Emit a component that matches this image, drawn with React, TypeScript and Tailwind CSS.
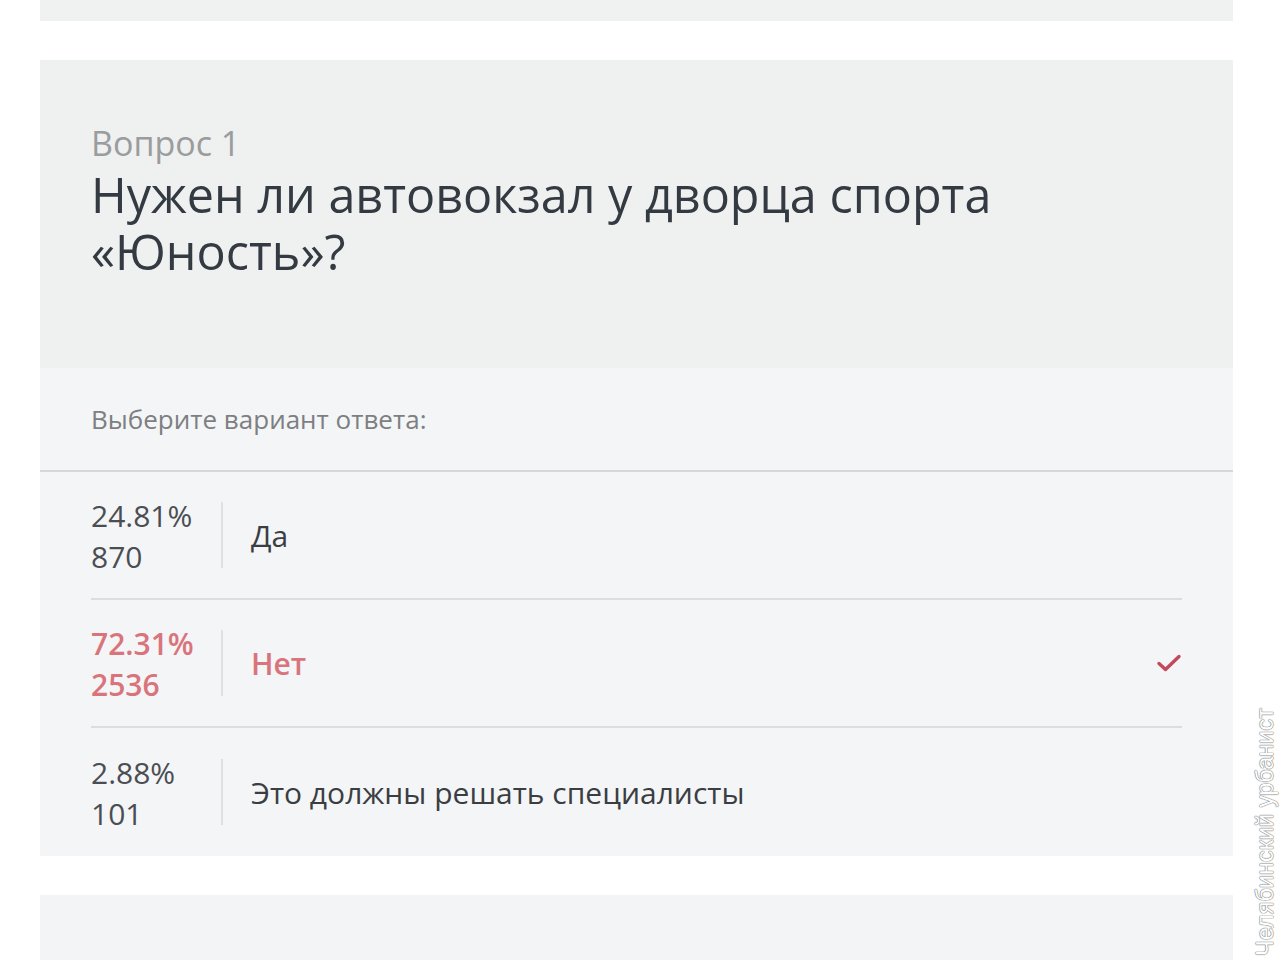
import React from "react";

const answers = [
  { pct: "24.81%", count: "870", label: "Да", chosen: false },
  { pct: "72.31%", count: "2536", label: "Нет", chosen: true },
  { pct: "2.88%", count: "101", label: "Это должны решать специалисты", chosen: false },
];

function Check() {
  return (
    <svg width="26" height="20" viewBox="0 0 26 20" fill="none">
      <path d="M3 10.5l6.5 6 13.5-13" stroke="#c5485f" strokeWidth="3.4" strokeLinecap="round" strokeLinejoin="round" />
    </svg>
  );
}

export default function App() {
  return (
    <div className="relative h-[960px] w-[1280px] overflow-hidden bg-white font-['Open_Sans',sans-serif]">
      <div className="ml-[40px] w-[1193px]">
        {/* previous question tail */}
        <div className="h-[21px] bg-[#f0f1f1]" />

        <div className="mt-[39px]">
          {/* question header */}
          <div className="h-[308px] bg-[#eff0f0] px-[51px] pt-[60px]">
            <div className="text-[34px] leading-[46px] text-[#9a9c9e]">Вопрос 1</div>
            <h2 className="text-[48.5px] leading-[57px] text-[#333a41]">
              Нужен ли автовокзал у дворца спорта
              <br />
              «Юность»?
            </h2>
          </div>

          {/* answers */}
          <div className="bg-[#f4f5f6]">
            <div className="h-[104px] border-b-2 border-[#d6d7d9] px-[51px] pt-[33px] text-[26px] leading-[36px] text-[#7d7f82]">
              Выберите вариант ответа:
            </div>
            <div className="px-[51px]">
              {answers.map((a, i) => (
                <div
                  key={a.label}
                  className={`flex h-[128px] items-center ${i < answers.length - 1 ? "border-b-2 border-[#dcdddf]" : ""}`}
                >
                  <div
                    className={`w-[130px] pt-[2px] text-[30px] leading-[41px] ${a.chosen ? "font-semibold text-[#d9747c]" : "text-[#4a4e53]"}`}
                  >
                    <div>{a.pct}</div>
                    <div>{a.count}</div>
                  </div>
                  <div className="h-[66px] w-[2px] bg-[#dfe0e2]" />
                  <div
                    className={`flex-1 pl-[28px] text-[30px] ${a.chosen ? "font-semibold text-[#d9747c]" : "text-[#3a3e43]"}`}
                  >
                    {a.label}
                  </div>
                  {a.chosen && <Check />}
                </div>
              ))}
            </div>
          </div>
        </div>

        {/* next question head */}
        <div className="mt-[39px] h-[70px] bg-[#f3f4f5]" />
      </div>

      {/* watermark */}
      <div className="absolute left-[1252px] top-[956px] origin-top-left -rotate-90 whitespace-nowrap font-['Liberation_Sans',sans-serif] text-[23.5px] leading-[26px] text-white [text-shadow:0_0_1px_#777,0_0_1px_#777,0_0_1px_#777]">
        Челябинский урбанист
      </div>
    </div>
  );
}
